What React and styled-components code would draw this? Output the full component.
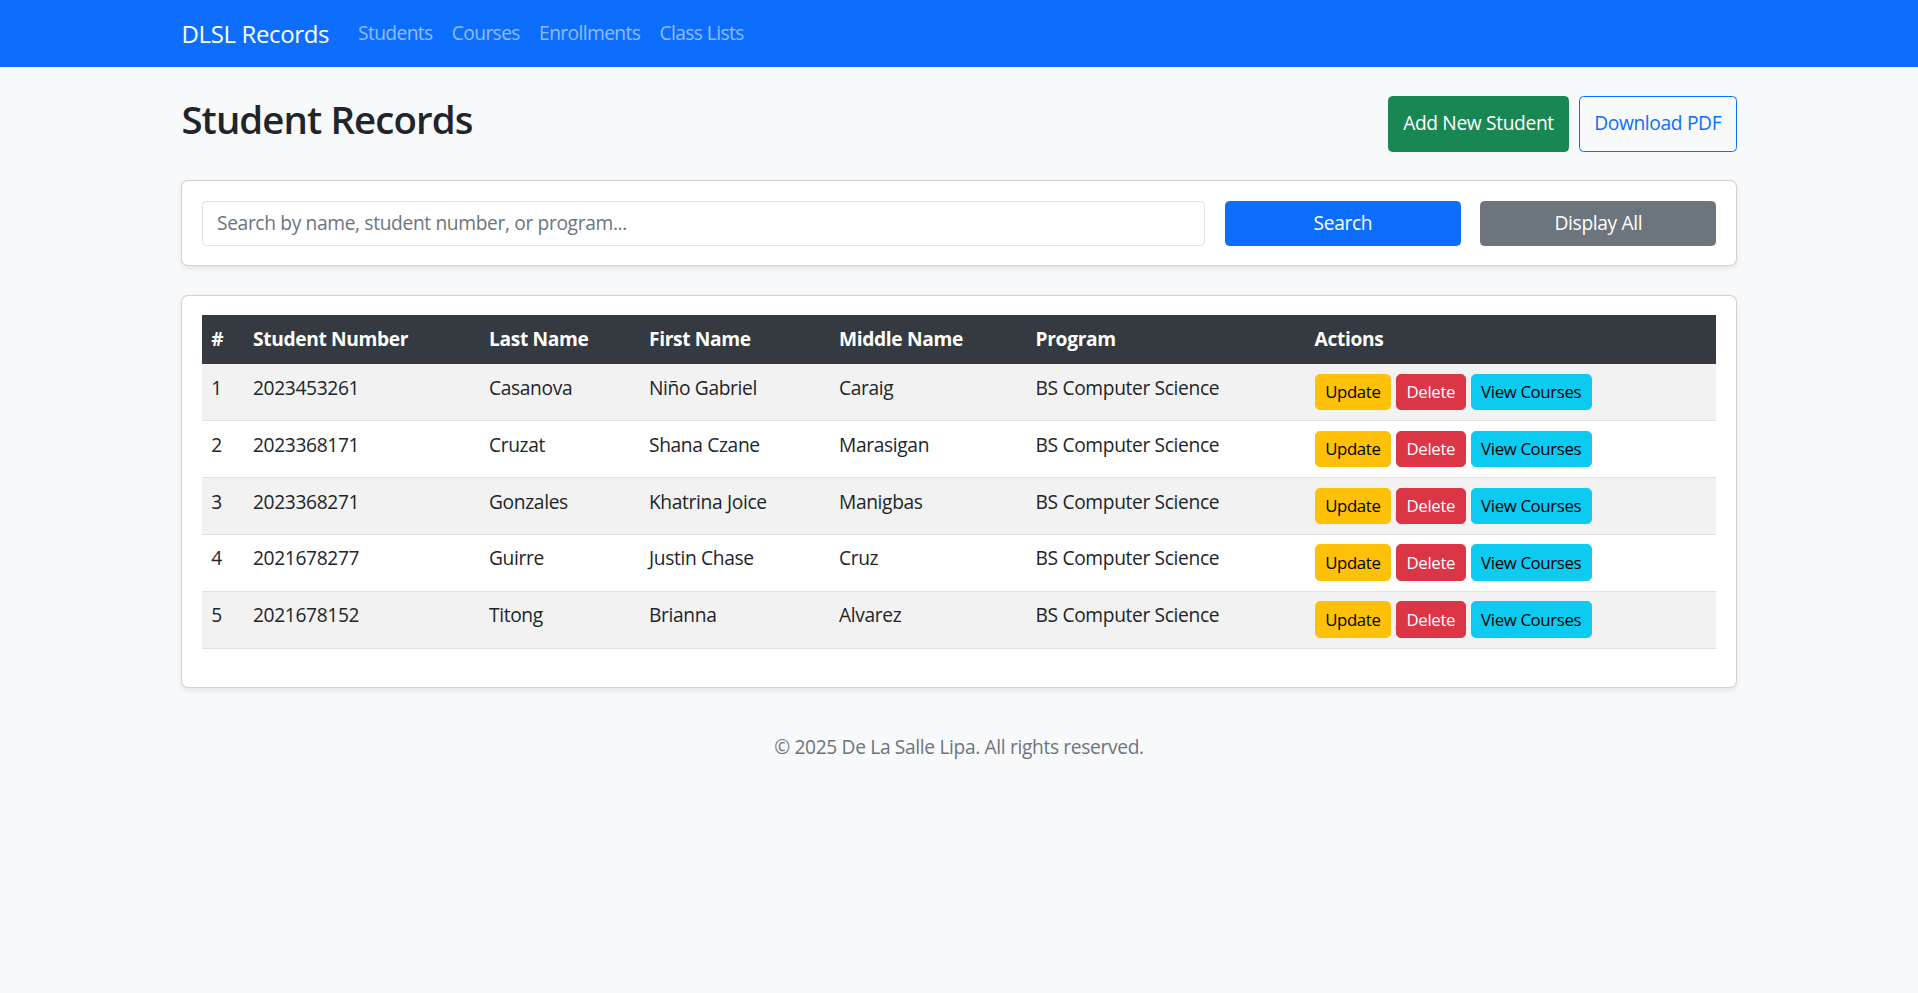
import styled, { createGlobalStyle, css } from "styled-components";

const GlobalStyle = createGlobalStyle`
*, *::before, *::after {
  box-sizing: border-box;
}
html, body {
  margin: 0;
  min-height: 100%;
  background-color: #f8f9fa;
}
body {
  font-family: "Segoe UI", "Open Sans", "Noto Sans", sans-serif;
  font-size: 19.2px;
  line-height: 1.5;
  letter-spacing: -0.35px;
  color: #212529;
}
`;

const Navbar = styled.nav`
background-color: #0d6efd;
padding: 9.6px 0;
`;

const Container = styled.div`
width: 100%;
max-width: 1584px;
margin: 0 auto;
padding: 0 14.4px;
`;

const NavInner = styled(Container)`
display: flex;
align-items: center;
`;

const Brand = styled.a`
color: #fff;
font-size: 24px;
line-height: 36px;
padding: 6px 0;
margin-right: 19.2px;
text-decoration: none;
`;

const NavLink = styled.a`
color: rgba(255, 255, 255, 0.55);
padding: 9.6px;
line-height: 28.8px;
letter-spacing: -0.6px;
text-decoration: none;
`;

const Main = styled(Container)`
margin-top: 28.8px;
`;

const HeaderRow = styled.div`
display: flex;
justify-content: space-between;
margin-bottom: 28.8px;
`;

const Title = styled.h2`
margin: 0 0 9.6px;
font-size: 38.4px;
font-weight: 600;
line-height: 1.2;
letter-spacing: -0.9px;
`;

const ButtonGroup = styled.div`
display: flex;
gap: 9.6px;
`;

const variants = {
  success: css`background: #198754; border-color: #198754; color: #fff;`,
  outline: css`background: transparent; border-color: #0d6efd; color: #0d6efd;`,
  primary: css`background: #0d6efd; border-color: #0d6efd; color: #fff;`,
  secondary: css`background: #6c757d; border-color: #6c757d; color: #fff;`,
  warning: css`background: #ffc107; border-color: #ffc107; color: #000;`,
  danger: css`background: #dc3545; border-color: #dc3545; color: #fff;`,
  info: css`background: #0dcaf0; border-color: #0dcaf0; color: #000;`,
};

const Button = styled.button`
font-family: inherit;
letter-spacing: inherit;
font-size: ${(p) => (p.$small ? "16.8px" : "19.2px")};
line-height: 1.5;
padding: ${(p) => (p.$small ? "4.8px 9.6px" : "7.2px 14.4px")};
border: 1.2px solid transparent;
border-radius: ${(p) => (p.$small ? "4.8px" : "4.5px")};
cursor: pointer;
white-space: nowrap;
${(p) => variants[p.$variant]}
`;

const Card = styled.div`
background: #fff;
border: 1.2px solid rgba(0, 0, 0, 0.175);
border-radius: 7px;
box-shadow: 0 2.4px 4.8px rgba(0, 0, 0, 0.075);
padding: 19.2px;
margin-bottom: 28.8px;
`;

const SearchForm = styled.form`
display: grid;
grid-template-columns: 1fr 236px 236px;
gap: 19.5px;
`;

const SearchInput = styled.input`
font-family: inherit;
letter-spacing: inherit;
font-size: 19.2px;
line-height: 1.5;
padding: 7.2px 14.4px;
border: 1.2px solid #dee2e6;
border-radius: 4.5px;
color: #212529;
&::placeholder {
  color: #6c757d;
}
`;

const Table = styled.table`
width: 100%;
border-collapse: collapse;
table-layout: fixed;
margin-bottom: 19.2px;
vertical-align: top;
`;

const Th = styled.th`
width: ${(p) => p.$w || "auto"};
text-align: left;
font-weight: 700;
padding: 9.6px;
background: #343a40;
color: #fff;
border-bottom: 1.2px solid #373b3e;
`;

const Row = styled.tr`
background: ${(p) => (p.$odd ? "#f2f2f2" : "#fff")};
`;

const Td = styled.td`
padding: 9.6px;
vertical-align: top;
border-bottom: 1.2px solid #dee2e6;
`;

const Actions = styled.div`
display: flex;
gap: 4.8px;
`;

const Footer = styled.footer`
text-align: center;
color: #6c757d;
margin-top: 44.5px;
padding-bottom: 40px;
`;

const columns = [
  ["#", "41.8px"],
  ["Student Number", "236px"],
  ["Last Name", "160px"],
  ["First Name", "190px"],
  ["Middle Name", "196.6px"],
  ["Program", "279px"],
  ["Actions", null],
];

const students = [
  ["2023453261", "Casanova", "Niño Gabriel", "Caraig", "BS Computer Science"],
  ["2023368171", "Cruzat", "Shana Czane", "Marasigan", "BS Computer Science"],
  ["2023368271", "Gonzales", "Khatrina Joice", "Manigbas", "BS Computer Science"],
  ["2021678277", "Guirre", "Justin Chase", "Cruz", "BS Computer Science"],
  ["2021678152", "Titong", "Brianna", "Alvarez", "BS Computer Science"],
];

export default function App() {
  return (
    <>
      <GlobalStyle />
      <Navbar>
        <NavInner>
          <Brand href="#">DLSL Records</Brand>
          <NavLink href="#">Students</NavLink>
          <NavLink href="#">Courses</NavLink>
          <NavLink href="#">Enrollments</NavLink>
          <NavLink href="#">Class Lists</NavLink>
        </NavInner>
      </Navbar>
      <Main>
        <HeaderRow>
          <Title>Student Records</Title>
          <ButtonGroup>
            <Button $variant="success">Add New Student</Button>
            <Button $variant="outline">Download PDF</Button>
          </ButtonGroup>
        </HeaderRow>
        <Card>
          <SearchForm onSubmit={(e) => e.preventDefault()}>
            <SearchInput placeholder="Search by name, student number, or program..." />
            <Button $variant="primary" type="submit">Search</Button>
            <Button $variant="secondary" type="button">Display All</Button>
          </SearchForm>
        </Card>
        <Card>
          <Table>
            <thead>
              <tr>
                {columns.map(([label, w]) => (
                  <Th key={label} $w={w}>{label}</Th>
                ))}
              </tr>
            </thead>
            <tbody>
              {students.map((s, i) => (
                <Row key={s[0]} $odd={i % 2 === 0}>
                  <Td>{i + 1}</Td>
                  {s.map((v, j) => (
                    <Td key={j}>{v}</Td>
                  ))}
                  <Td>
                    <Actions>
                      <Button $small $variant="warning">Update</Button>
                      <Button $small $variant="danger">Delete</Button>
                      <Button $small $variant="info">View Courses</Button>
                    </Actions>
                  </Td>
                </Row>
              ))}
            </tbody>
          </Table>
        </Card>
        <Footer>© 2025 De La Salle Lipa. All rights reserved.</Footer>
      </Main>
    </>
  );
}
